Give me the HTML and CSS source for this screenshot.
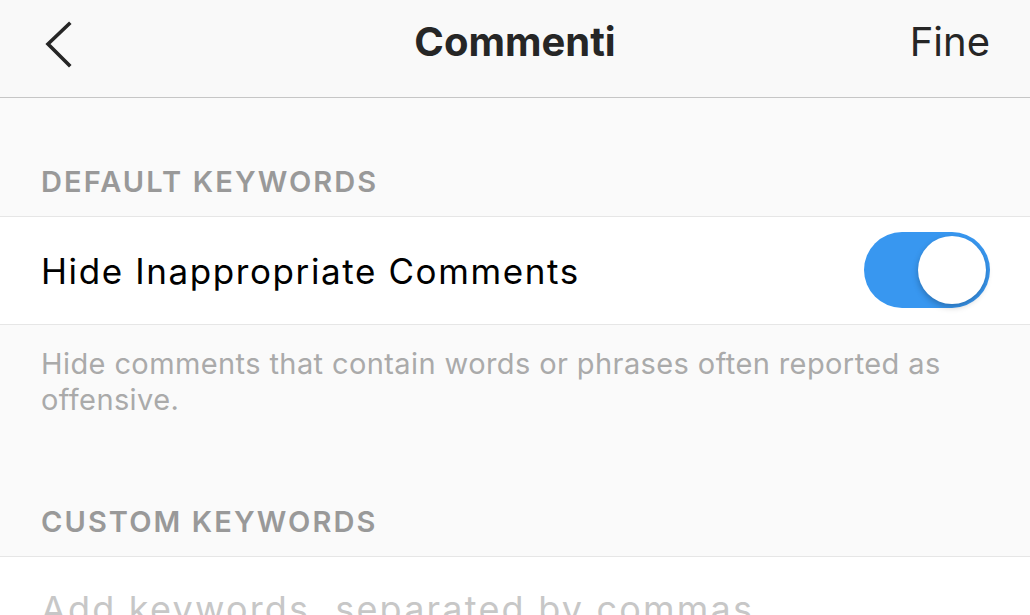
FILE: index.html
```html
<!DOCTYPE html>
<html>
<head>
<meta charset="utf-8">
<link rel="stylesheet" href="styles.css">
</head>
<body>
<header class="nav">
  <div class="nav-left">
    <svg class="back" width="40" height="60" viewBox="0 0 40 60"><polyline points="27,12 6,32 27,53" fill="none" stroke="#262626" stroke-width="3.6" stroke-linecap="square"/></svg>
  </div>
  <h1 class="title">Commenti</h1>
  <div class="nav-right">Fine</div>
</header>
<main>
  <div class="section-header first">DEFAULT KEYWORDS</div>
  <div class="row">
    <span class="row-label">Hide Inappropriate Comments</span>
    <span class="toggle"><span class="knob"></span></span>
  </div>
  <p class="desc">Hide comments that contain words or phrases often reported as offensive.</p>
  <div class="section-header">CUSTOM KEYWORDS</div>
  <div class="input-row">
    <span class="placeholder">Add keywords, separated by commas</span>
  </div>
</main>
</body>
</html>
```
FILE: styles.css
```css
html, body {
  margin: 0;
  padding: 0;
  background: #fafafa;
  font-family: Inter, "Liberation Sans", sans-serif;
  overflow: hidden;
  height: 615px;
}
.nav {
  height: 97px;
  border-bottom: 1px solid #c6c6c6;
  background: #f9f9f9;
  display: flex;
  align-items: center;
  padding: 0 40px;
}
.nav-left {
  flex: 1;
  display: flex;
  align-items: center;
  margin-top: -14px;
}
.back { display: block; margin-left: 2px; }
.title {
  margin: 0;
  font-size: 40px;
  font-weight: 700;
  color: #262626;
  margin-top: -14px;
}
.nav-right {
  flex: 1;
  text-align: right;
  font-size: 40px;
  color: #262626;
  margin-top: -14px;
}
.section-header {
  font-size: 29px;
  font-weight: 600;
  color: #999999;
  line-height: 34px;
  letter-spacing: 2.1px;
  padding: 0 41px 17px;
}
.section-header.first { padding-top: 67px; }
.row {
  background: #fff;
  border-top: 1px solid #e6e6e6;
  border-bottom: 1px solid #e6e6e6;
  height: 107px;
  display: flex;
  align-items: center;
  justify-content: space-between;
  padding: 0 40px 0 41px;
}
.row-label {
  font-size: 35px;
  letter-spacing: 1.6px;
  color: #000;
}
.toggle {
  width: 126px;
  height: 76px;
  border-radius: 38px;
  background: #3897f0;
  position: relative;
  display: block;
  margin-top: -2px;
}
.knob {
  position: absolute;
  right: 4px;
  top: 4px;
  width: 68px;
  height: 68px;
  border-radius: 50%;
  background: #fff;
  box-shadow: 0 3px 6px rgba(0,0,0,0.25);
}
.desc {
  margin: 0;
  padding: 21px 80px 87px 41px;
  font-size: 29px;
  letter-spacing: 0.4px;
  line-height: 36px;
  color: #aaaaaa;
}
.input-row {
  background: #fff;
  border-top: 1px solid #e6e6e6;
  height: 120px;
  padding: 30px 41px 0;
  box-sizing: border-box;
}
.placeholder {
  font-size: 36px;
  letter-spacing: 2.2px;
  color: #c7c7c7;
}
```
